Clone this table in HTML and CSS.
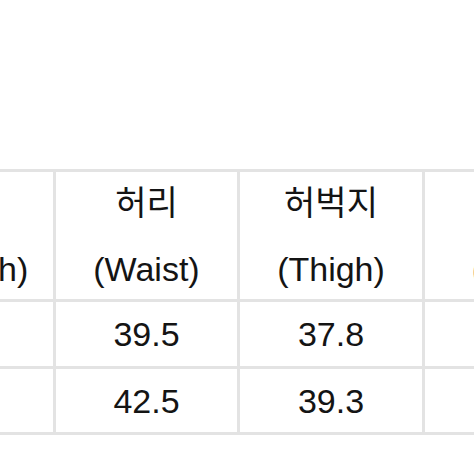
FILE: index.html
```html
<!DOCTYPE html>
<html lang="ko">
<head>
<meta charset="utf-8">
<link rel="stylesheet" href="styles.css">
</head>
<body>
<div class="size-table">
  <div class="cell head"><span class="line">총장</span><span class="line">(Length)</span></div>
  <div class="cell head"><span class="line">허리</span><span class="line">(Waist)</span></div>
  <div class="cell head"><span class="line">허벅지</span><span class="line">(Thigh)</span></div>
  <div class="cell head"><span class="line">밑위</span><span class="line">(Rise)</span></div>
  <div class="cell head"><span class="line">밑단</span><span class="line">(Hem)</span></div>

  <div class="cell">100</div>
  <div class="cell">39.5</div>
  <div class="cell">37.8</div>
  <div class="cell">31</div>
  <div class="cell">27</div>

  <div class="cell">102</div>
  <div class="cell">42.5</div>
  <div class="cell">39.3</div>
  <div class="cell">32</div>
  <div class="cell">28</div>
</div>
</body>
</html>
```
FILE: styles.css
```css
html, body {
  margin: 0;
  padding: 0;
  background: #ffffff;
  overflow: hidden;
}

body {
  width: 474px;
  height: 474px;
  font-family: "Liberation Sans", "Noto Sans CJK KR", sans-serif;
  color: #141414;
}

.size-table {
  display: grid;
  grid-template-columns: 176px 181px 182px 184px 182px;
  grid-template-rows: 127px 64px 63px;
  gap: 3px;
  padding: 3px;
  background: #e3e3e3;
  width: max-content;
  margin: 169px 0 0 -126px;
}

.cell {
  background: #ffffff;
  display: flex;
  align-items: center;
  justify-content: center;
  font-size: 34px;
  line-height: 40px;
}

.head {
  flex-direction: column;
  gap: 26px;
}

.line {
  display: block;
  line-height: 40px;
  white-space: nowrap;
}
```
